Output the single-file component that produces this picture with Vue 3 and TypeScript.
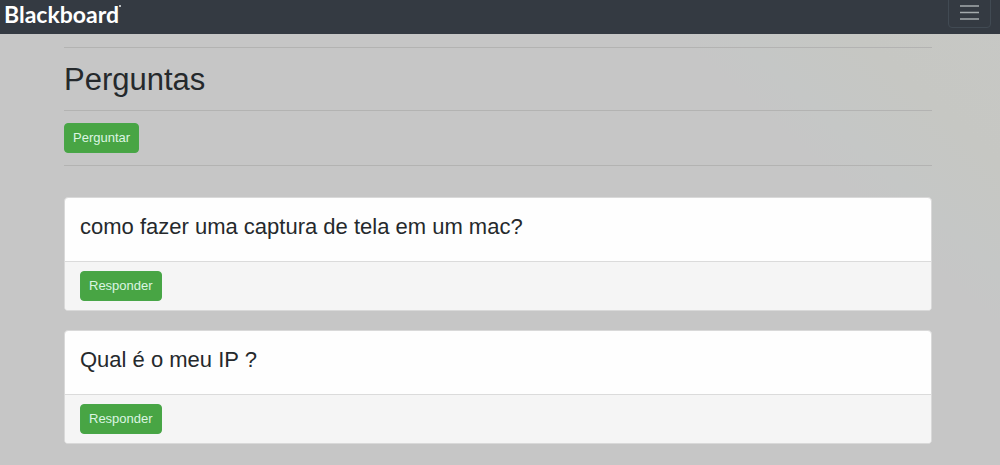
<script setup lang="ts">
import { ref } from 'vue'

interface Question {
  id: number
  title: string
}

const questions = ref<Question[]>([
  { id: 1, title: 'como fazer uma captura de tela em um mac?' },
  { id: 2, title: 'Qual é o meu IP ?' },
])
</script>

<template>
  <div class="page">
    <header class="navbar">
      <a class="brand" href="#">Blackboard<span class="mark"></span></a>
      <button class="toggler" type="button" aria-label="Menu">
        <svg width="21" height="16" viewBox="0 0 21 16" aria-hidden="true">
          <path d="M1 2H20M1 8.5H20M1 15H20" stroke="#a4aaad" stroke-width="1.6" fill="none" />
        </svg>
      </button>
    </header>
    <main class="container">
      <hr />
      <h1>Perguntas</h1>
      <hr />
      <button class="btn" type="button">Perguntar</button>
      <hr />
      <section class="list">
        <article v-for="question in questions" :key="question.id" class="card">
          <div class="card-body">
            <h2>{{ question.title }}</h2>
          </div>
          <footer class="card-footer">
            <button class="btn" type="button">Responder</button>
          </footer>
        </article>
      </section>
    </main>
  </div>
</template>

<style>
body {
  margin: 0;
  background: #c6c6c6;
}
</style>

<style scoped>
.page {
  box-sizing: border-box;
  min-height: 100vh;
  background: linear-gradient(42deg, #c6c6c6 76%, #c5c7c6 80%, #c6c7c3 88%, #c7c8c5 100%);
  color: #25292c;
  font-family: "Liberation Sans", Arial, sans-serif;
}

.navbar {
  box-sizing: border-box;
  display: flex;
  justify-content: space-between;
  align-items: flex-end;
  height: 34px;
  padding: 0 9px 6px 4px;
  overflow: hidden;
  background: #343a42;
}

.brand {
  display: flex;
  align-items: flex-start;
  color: #fff;
  font-family: Lato, "Liberation Sans", sans-serif;
  font-size: 23px;
  font-weight: 700;
  line-height: 28px;
  text-decoration: none;
}

.mark {
  width: 2px;
  height: 2px;
  margin-top: 5px;
  background: #b9bdc0;
}

.toggler {
  box-sizing: border-box;
  display: flex;
  flex: none;
  justify-content: center;
  align-items: center;
  width: 43px;
  height: 32px;
  padding: 0;
  border: 1px solid #414a53;
  border-radius: 4px;
  background: transparent;
}

.container {
  margin: 0 auto;
  padding: 13px 68px 20px 64px;
}

hr {
  height: 1px;
  margin: 0;
  border: 0;
  background: #b3b3b2;
}

h1 {
  margin: 0;
  padding: 13px 0 11px;
  font-size: 31px;
  font-weight: 400;
  line-height: 38px;
}

.btn {
  box-sizing: border-box;
  display: block;
  height: 30px;
  padding: 0 8px;
  border: 1px solid #48a648;
  border-radius: 4px;
  background: #48a544;
  color: #dcf5e2;
  font-family: inherit;
  font-size: 13px;
  line-height: 20px;
}

.container > .btn {
  margin: 12px 0;
}

.list {
  display: flex;
  flex-direction: column;
  gap: 19px;
  margin-top: 31px;
}

.card {
  overflow: hidden;
  border: 1px solid #d9d9d9;
  border-radius: 4px;
  background: #fefefe;
}

.card-body {
  padding: 16px 15px 21px;
}

h2 {
  margin: 0;
  font-size: 22px;
  font-weight: 400;
  line-height: 26px;
}

.card-footer {
  padding: 9px 15px;
  border-top: 1px solid #dbdbdb;
  background: #f5f5f5;
}
</style>
